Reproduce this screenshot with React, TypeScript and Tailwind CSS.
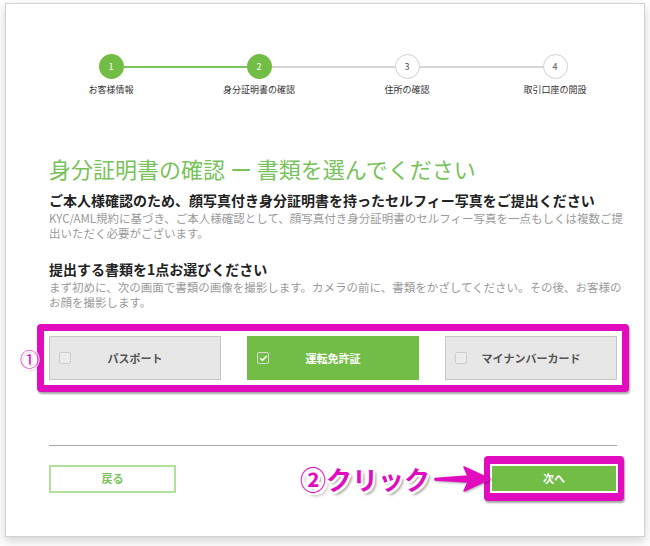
import { Check } from "lucide-react";

type Step = { n: number; label: string };

const steps: Step[] = [
  { n: 1, label: "お客様情報" },
  { n: 2, label: "身分証明書の確認" },
  { n: 3, label: "住所の確認" },
  { n: 4, label: "取引口座の開設" },
];

const current = 2;

const docs = [
  { id: "passport", label: "パスポート" },
  { id: "license", label: "運転免許証" },
  { id: "mynumber", label: "マイナンバーカード" },
];

function Stepper() {
  return (
    <div className="grid grid-cols-4 w-[592px] ml-[31px]">
      {steps.map((s, i) => {
        const done = s.n <= current;
        const leftColor =
          i === 0 ? "bg-transparent" : s.n <= current ? "bg-[#7cc35b]" : "bg-[#d6d6d6]";
        const rightColor =
          i === steps.length - 1 ? "bg-transparent" : s.n < current ? "bg-[#7cc35b]" : "bg-[#d6d6d6]";
        return (
          <div key={s.n} className="flex flex-col items-center">
            <div className="flex items-center w-full">
              <div className={`flex-1 h-[2px] ${leftColor}`} />
              <div
                className={
                  done
                    ? "w-[25px] h-[25px] rounded-full bg-[#72bd45] text-white flex items-center justify-center text-[9px]"
                    : "w-[25px] h-[25px] rounded-full bg-white border border-[#cfcfcf] text-[#555] flex items-center justify-center text-[9px]"
                }
              >
                {s.n}
              </div>
              <div className={`flex-1 h-[2px] ${rightColor}`} />
            </div>
            <p className="mt-[5px] text-[9px] leading-[12px] text-[#333]">{s.label}</p>
          </div>
        );
      })}
    </div>
  );
}

function DocOption({ label, selected }: { label: string; selected: boolean }) {
  return (
    <div
      className={
        selected
          ? "relative h-[44px] flex items-center justify-center bg-[#72bd45] border border-[#72bd45]"
          : "relative h-[44px] flex items-center justify-center bg-[#e7e7e7] border border-[#c6c6c6]"
      }
    >
      <div
        className={
          selected
            ? "absolute left-[9px] top-1/2 -translate-y-1/2 w-[12px] h-[12px] rounded-[2px] border border-[#d9d9d9] flex items-center justify-center"
            : "absolute left-[9px] top-1/2 -translate-y-1/2 w-[12px] h-[12px] rounded-[2px] border border-[#cdcdcd] bg-[#ececec]"
        }
      >
        {selected && <Check size={9} strokeWidth={4} className="text-white" />}
      </div>
      <span
        className={
          selected ? "text-[11px] font-bold text-white" : "text-[11px] font-bold text-[#555]"
        }
      >
        {label}
      </span>
    </div>
  );
}

function ClickArrow() {
  return (
    <svg width="58" height="30" viewBox="0 0 58 30" className="relative z-10 -mr-[8px] drop-shadow-[1px_1px_1px_rgba(0,0,0,0.35)]">
      <path
        d="M1 14.5 L34 12 L30 3 L56 15 L30 27 L34 18 L1 16 Z"
        fill="#e20cbf"
        stroke="#e20cbf"
        strokeWidth="1.5"
        strokeLinejoin="round"
      />
    </svg>
  );
}

export default function App() {
  return (
    <div className="w-[650px] h-[546px] bg-white pt-[3px] pl-[5px] font-['Noto_Sans_CJK_JP',sans-serif]">
      <div className="w-[640px] h-[534px] border border-[#d2d2d2] bg-white shadow-[0_4px_10px_rgba(0,0,0,0.18)] pt-[50px]">
        <Stepper />

        <div className="ml-[43px] w-[568px] mt-[59px]">
          <h1 className="text-[22px] leading-[26px] text-[#78c25a] whitespace-nowrap">
            身分証明書の確認 ー 書類を選んでください
          </h1>

          <h2 className="mt-[10px] text-[14px] leading-[18px] font-bold text-[#222] whitespace-nowrap">
            ご本人様確認のため、顔写真付き身分証明書を持ったセルフィー写真をご提出ください
          </h2>
          <p className="mt-[2px] text-[11.5px] leading-[15px] text-[#9a9a9a] whitespace-nowrap">
            KYC/AML規約に基づき、ご本人様確認として、顔写真付き身分証明書のセルフィー写真を一点もしくは複数ご提
            <br />
            出いただく必要がございます。
          </p>

          <h2 className="mt-[19px] text-[14px] leading-[18px] font-bold text-[#222] whitespace-nowrap">
            提出する書類を1点お選びください
          </h2>
          <p className="mt-[2px] text-[11.5px] leading-[15px] text-[#9a9a9a] whitespace-nowrap">
            まず初めに、次の画面で書類の画像を撮影します。カメラの前に、書類をかざしてください。その後、お客様の
            <br />
            お顔を撮影します。
          </p>

          {/* document choices, annotated with a magenta frame */}
          <div className="relative mt-[14px] -mx-[12px] border-[7px] border-[#e20cbf] rounded-[4px] bg-white p-[5px] shadow-[1px_2px_2px_rgba(0,0,0,0.35)]">
            <span className="absolute left-[-24px] top-1/2 -translate-y-1/2 text-[19px] leading-none text-[#e20cbf] [text-shadow:-1px_-1px_0_#fff,1px_-1px_0_#fff,-1px_1px_0_#fff,1px_1px_0_#fff,1px_2px_2px_rgba(0,0,0,0.4)]">
              ①
            </span>
            <div className="grid grid-cols-3 gap-[26px]">
              {docs.map((d) => (
                <DocOption key={d.id} label={d.label} selected={d.id === "license"} />
              ))}
            </div>
          </div>

          <div className="mt-[53px] h-px bg-[#a8a8a8] shadow-[0_-3px_6px_rgba(0,0,0,0.06)]" />

          <div className="mt-[10px] flex items-center justify-between">
            <button className="w-[127px] h-[28px] border-2 border-[#b3e09c] bg-white text-[11px] font-bold text-[#78c25a]">
              戻る
            </button>
            <div className="flex items-center -mr-[7px]">
              <span className="mr-[4px] text-[26px] leading-none font-bold text-[#e20cbf] [text-shadow:-2px_-2px_0_#fff,2px_-2px_0_#fff,-2px_2px_0_#fff,2px_2px_0_#fff,0_2px_0_#fff,2px_0_0_#fff,-2px_0_0_#fff,0_-2px_0_#fff,3px_3px_3px_rgba(0,0,0,0.45)]">
                ②クリック
              </span>
              <ClickArrow />
              <div className="rounded-[4px] bg-[#e20cbf] px-[6px] py-[8px] shadow-[1px_2px_2px_rgba(0,0,0,0.35)]">
                <button className="w-[128px] h-[29px] border-2 border-white bg-[#72bd45] text-[11px] font-bold text-white">
                  次へ
                </button>
              </div>
            </div>
          </div>
        </div>
      </div>
    </div>
  );
}
